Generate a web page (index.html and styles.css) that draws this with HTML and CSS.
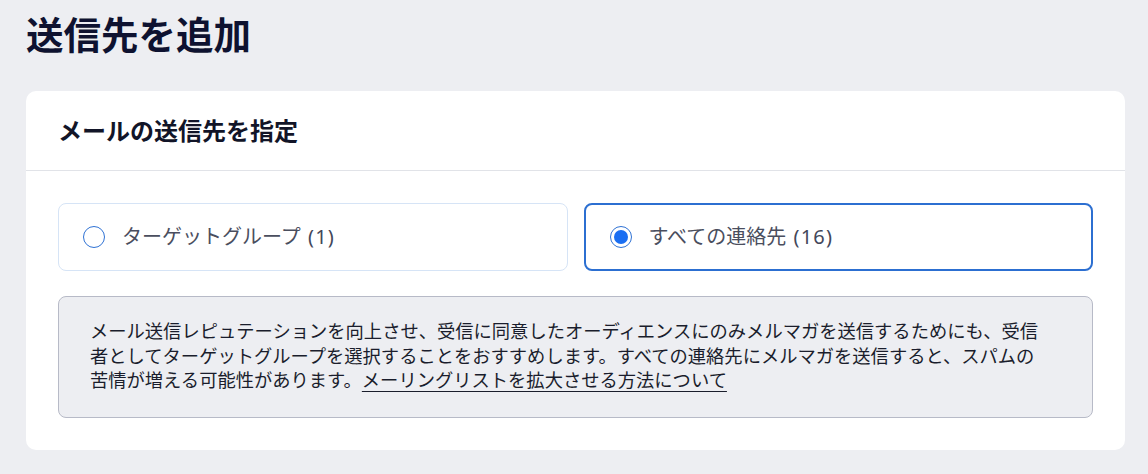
FILE: index.html
```html
<!DOCTYPE html>
<html lang="ja">
<head>
<meta charset="utf-8">
<title>送信先を追加</title>
<link rel="stylesheet" href="styles.css">
</head>
<body>
<div class="page">
  <h1 class="title">送信先を追加</h1>
  <section class="card">
    <header class="card-header">
      <h2 class="card-title">メールの送信先を指定</h2>
    </header>
    <div class="card-body">
      <div class="options">
        <label class="option">
          <span class="radio"></span>
          <span class="option-label">ターゲットグループ <span class="count">(1)</span></span>
        </label>
        <label class="option option-selected">
          <span class="radio radio-checked"></span>
          <span class="option-label">すべての連絡先 <span class="count">(16)</span></span>
        </label>
      </div>
      <div class="notice">
        <p class="notice-text">メール送信レピュテーションを向上させ、受信に同意したオーディエンスにのみメルマガを送信するためにも、受信者としてターゲットグループを選択することをおすすめします。すべての連絡先にメルマガを送信すると、スパムの苦情が増える可能性があります。<a class="notice-link" href="#">メーリングリストを拡大させる方法について</a></p>
      </div>
    </div>
  </section>
</div>
</body>
</html>
```

FILE: styles.css
```css
* { box-sizing: border-box; }
html, body {
  margin: 0;
  padding: 0;
  background: #edeef2;
  font-family: "Noto Sans", "Noto Sans CJK JP", sans-serif;
  color: #151829;
}
.page {
  padding: 9px 23px 24px 26px;
}
.title {
  margin: 0;
  font-size: 37.5px;
  line-height: 52px;
  font-weight: 700;
  color: #0e1230;
}
.card {
  margin-top: 30px;
  background: #ffffff;
  border-radius: 10px;
}
.card-header {
  height: 80px;
  display: flex;
  align-items: center;
  padding: 0 32px;
  border-bottom: 1px solid #e1e3e8;
}
.card-title {
  margin: 0;
  font-size: 24px;
  line-height: 32px;
  font-weight: 700;
  color: #121528;
}
.card-body {
  padding: 32px;
}
.options {
  display: grid;
  grid-template-columns: 1fr 1fr;
  gap: 16px;
}
.option {
  height: 68px;
  display: flex;
  align-items: center;
  gap: 17px;
  padding: 0 24px;
  border: 1px solid #d6e4f6;
  border-radius: 8px;
  background: #fff;
}
.option-selected {
  border: 2px solid #2c6fd1;
  padding: 0 23px 0 24px;
}
.radio {
  width: 22px;
  height: 22px;
  border-radius: 50%;
  border: 1.5px solid #2f72d4;
  background: #fff;
  flex: none;
  display: flex;
  align-items: center;
  justify-content: center;
}
.radio-checked::after {
  content: "";
  width: 14px;
  height: 14px;
  border-radius: 50%;
  background: #1a6ef2;
}
.option-label {
  font-size: 20px;
  line-height: 28px;
  color: #4a4e5e;
}
.count {
  margin-left: 2px;
  letter-spacing: 1.2px;
  color: #43475a;
}
.notice {
  margin-top: 25px;
  background: #edeef2;
  border: 1px solid #b7bac7;
  border-radius: 8px;
  padding: 22px 32px 24px 31px;
  min-height: 121px;
}
.notice-text {
  margin: 0;
  max-width: 960px;
  font-size: 18.3px;
  line-height: 24.5px;
  color: #1a1d2c;
}
.notice-link {
  color: #1a1d2c;
  text-decoration: underline;
  text-underline-offset: 4px;
}
```
